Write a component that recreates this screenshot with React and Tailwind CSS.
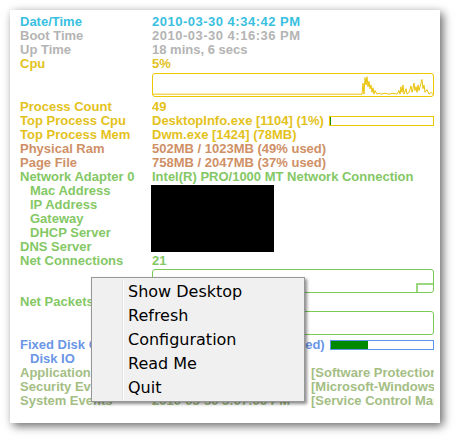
import React from 'react';

const CPU_POINTS =
  '0,22 209,22 210,10 211,22 212,4 213,12 214,3 215,14 216,8 217,16 218,12 219,20 220,15 221,22 222,18 224,22 226,21 228,22 232,21 236,22 240,21 244,22 246,18 247,22 248,14 249,20 250,12 251,22 253,16 254,22 256,20 258,13 259,20 260,16 261,10 262,18 263,14 264,20 265,12 266,18 267,14 268,10 269,6 270,16 271,12 272,20 274,17 276,22 278,20 280,22 282,22';

const Row = ({ label, color, indent, children }) => (
  <div className={`flex h-[14px] leading-[14px] ${color}`}>
    <div className={`w-[132px] shrink-0 whitespace-nowrap overflow-hidden ${indent ? 'pl-[10px]' : ''}`}>{label}</div>
    <div className="flex-1 min-w-0 flex items-center whitespace-nowrap overflow-hidden">{children}</div>
  </div>
);

const Graph = ({ border, className, children }) => (
  <div className={`ml-[132px] h-[24px] border rounded-[3px] overflow-hidden ${border} ${className}`}>{children}</div>
);

const Bar = ({ border, fill, pct }) => (
  <div className={`flex-1 h-[10px] border ${border} ml-[5px] bg-white`}>
    <div className={`h-full ${fill}`} style={{ width: pct }} />
  </div>
);

const menuItems = ['Show Desktop', 'Refresh', 'Configuration', 'Read Me', 'Quit'];

export default function App() {
  return (
    <div className="relative w-[458px] h-[441px] bg-white pt-[10px] pl-[10px] font-['Liberation_Sans',Arial,sans-serif] font-bold text-[13px] overflow-hidden">
      <div className="w-[430px] h-[413px] bg-white shadow-[3px_3px_9px_rgba(0,0,0,0.6)] pt-[5px] pl-[10px] pr-[6px]">
        <Row label="Date/Time" color="text-[#38c0e0]"><span className="tracking-[0.5px]">2010-03-30 4:34:42 PM</span></Row>
        <Row label="Boot Time" color="text-[#b4b4b4]"><span className="tracking-[0.5px]">2010-03-30 4:16:36 PM</span></Row>
        <Row label="Up Time" color="text-[#b4b4b4]">18 mins, 6 secs</Row>
        <Row label="Cpu" color="text-[#e4c21c]">5%</Row>
        <Graph border="border-[#ecc800]" className="mt-[2px] mb-[3px]">
          <svg width="282" height="22" viewBox="0 0 282 24" preserveAspectRatio="none" className="block">
            <polyline points={CPU_POINTS} fill="none" stroke="#e8c000" strokeWidth="1" />
          </svg>
        </Graph>
        <Row label="Process Count" color="text-[#e4c21c]">49</Row>
        <Row label="Top Process Cpu" color="text-[#e4c21c]">
          <span>DesktopInfo.exe [1104] (1%)</span>
          <Bar border="border-[#ecc800]" fill="bg-[#1a8a00]" pct="1%" />
        </Row>
        <Row label="Top Process Mem" color="text-[#e4c21c]">Dwm.exe [1424] (78MB)</Row>
        <Row label="Physical Ram" color="text-[#cf9066]">502MB / 1023MB (49% used)</Row>
        <Row label="Page File" color="text-[#cf9066]">758MB / 2047MB (37% used)</Row>
        <Row label="Network Adapter 0" color="text-[#84c865]">Intel(R) PRO/1000 MT Network Connection</Row>
        <div className="relative">
          <div className="absolute left-[131px] top-[1px] w-[123px] h-[67px] bg-black" />
          <Row label="Mac Address" color="text-[#84c865]" indent></Row>
          <Row label="IP Address" color="text-[#84c865]" indent></Row>
          <Row label="Gateway" color="text-[#84c865]" indent></Row>
          <Row label="DHCP Server" color="text-[#84c865]" indent></Row>
          <Row label="DNS Server" color="text-[#84c865]"></Row>
        </div>
        <Row label="Net Connections" color="text-[#84c865]">21</Row>
        <Graph border="border-[#7acb55]" className="mt-[1px] mb-[2px]">
          <svg width="282" height="22" viewBox="0 0 282 22" className="block">
            <polyline points="264,22 264,14 282,14" fill="none" stroke="#7acb55" strokeWidth="1.5" />
          </svg>
        </Graph>
        <Row label="Net Packets" color="text-[#84c865]"></Row>
        <Graph border="border-[#7acb55]" className="mt-[2px] mb-[3px] h-[23px]" />
        <Row label="Fixed Disk C:" color="text-[#6a96e6]">
          <span>17.4GB / 48.8GB (36% used)</span>
          <Bar border="border-[#5b95ea]" fill="bg-[#008800]" pct="36%" />
        </Row>
        <Row label="Disk IO" color="text-[#6a96e6]" indent></Row>
        <Row label="Application" color="text-[#a4be84]">
          <span className="inline-block w-[159px] shrink-0">2010-03-30 4:20:12 PM</span>
          <span>[Software Protection Platform Service]</span>
        </Row>
        <Row label="Security Events" color="text-[#a4be84]">
          <span className="inline-block w-[159px] shrink-0">2010-03-30 4:17:02 PM</span>
          <span>[Microsoft-Windows-Security-Auditing]</span>
        </Row>
        <Row label="System Events" color="text-[#a4be84]">
          <span className="inline-block w-[159px] shrink-0">2010-03-30 3:07:06 PM</span>
          <span>[Service Control Manager]</span>
        </Row>
      </div>

      <div className="absolute left-[91px] top-[277px] w-[214px] h-[125px] bg-[#f0f0f0] border border-[#979797] shadow-[2px_2px_3px_rgba(0,0,0,0.45)] py-[2px] font-['DejaVu_Sans',Verdana,sans-serif] font-normal text-[16px] text-black">
        <div className="absolute left-[30px] top-[2px] bottom-[1px] w-[2px] border-l border-[#e2e3e3] border-r border-r-white" />
        {menuItems.map((item) => (
          <div key={item} className="h-[24px] leading-[24px] pl-[36px] whitespace-nowrap">{item}</div>
        ))}
      </div>
    </div>
  );
}
